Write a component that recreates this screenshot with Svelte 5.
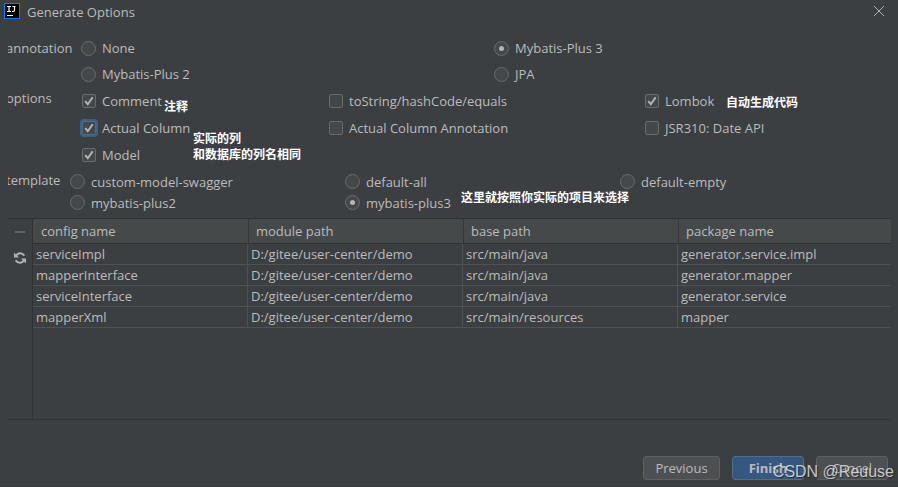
<script>
  const annotations = ['None', 'Mybatis-Plus 3', 'Mybatis-Plus 2', 'JPA'];
  const options = [
    { label: 'Comment', checked: true },
    { label: 'toString/hashCode/equals', checked: false },
    { label: 'Lombok', checked: true },
    { label: 'Actual Column', checked: true, active: true },
    { label: 'Actual Column Annotation', checked: false },
    { label: 'JSR310: Date API', checked: false },
    { label: 'Model', checked: true }
  ];
  const templates = ['custom-model-swagger', 'default-all', 'default-empty', 'mybatis-plus2', 'mybatis-plus3'];
  const columns = ['config name', 'module path', 'base path', 'package name'];
  const rows = [
    ['serviceImpl', 'D:/gitee/user-center/demo', 'src/main/java', 'generator.service.impl'],
    ['mapperInterface', 'D:/gitee/user-center/demo', 'src/main/java', 'generator.mapper'],
    ['serviceInterface', 'D:/gitee/user-center/demo', 'src/main/java', 'generator.service'],
    ['mapperXml', 'D:/gitee/user-center/demo', 'src/main/resources', 'mapper']
  ];
  let annotation = $state('Mybatis-Plus 3');
  let template = $state('mybatis-plus3');
</script>

<div class="dialog">
  <header>
    <svg class="logo" width="16" height="16" viewBox="0 0 16 16" aria-hidden="true">
      <rect width="16" height="16" fill="#087cfa" />
      <rect x="1" y="1" width="14" height="14" fill="#000" />
      <path d="M3 3.500h4M5 3.500v5M3 8.500h4M8.500 3.500h3M10.500 3.500v3.800q0 1.200-1.200 1.200H8" fill="none" stroke="#fff" stroke-width="1.200" />
      <path d="M3 12.500h6" stroke="#fff" stroke-width="1" />
    </svg>
    <h1>Generate Options</h1>
    <button class="close" aria-label="Close">
      <svg width="12" height="12" viewBox="0 0 12 12"><path d="M1 1l10 10M11 1L1 11" stroke="#afb1b3" stroke-width="1" /></svg>
    </button>
  </header>

  <main>
    <fieldset class="annotation" aria-labelledby="l-annotation">
      <span class="name" id="l-annotation">annotation</span>
      <div class="choices">
        {#each annotations as item}
          <label><input type="radio" name="annotation" value={item} bind:group={annotation} />{item}</label>
        {/each}
      </div>
    </fieldset>

    <fieldset class="options" aria-labelledby="l-options">
      <span class="name" id="l-options">options</span>
      <div class="choices">
        {#each options as item}
          <label>
            <span class="box" class:active={item.active}>
              <input type="checkbox" bind:checked={item.checked} />
              <svg width="14" height="14" viewBox="0 0 14 14" aria-hidden="true"><path d="M3.200 7.200l2.600 3L10.700 3.200" fill="none" stroke="#b4b4b4" stroke-width="2" /></svg>
            </span>{item.label}
          </label>
        {/each}
      </div>
      <p class="note comment">注释</p>
      <p class="note column">实际的列<br />和数据库的列名相同</p>
      <p class="note lombok">自动生成代码</p>
    </fieldset>

    <fieldset class="template" aria-labelledby="l-template">
      <span class="name" id="l-template">template</span>
      <div class="choices">
        {#each templates as item}
          <label><input type="radio" name="template" value={item} bind:group={template} />{item}</label>
        {/each}
      </div>
      <p class="note project">这里就按照你实际的项目来选择</p>
    </fieldset>

    <section>
      <div class="tools">
        <button aria-label="Remove" disabled>
          <svg width="12" height="12" viewBox="0 0 12 12"><path d="M1 6h10" stroke="#616364" stroke-width="2" /></svg>
        </button>
        <button aria-label="Refresh">
          <svg width="12" height="12" viewBox="0 0 12 12" fill="none" stroke="#afb1b3" stroke-width="2">
            <path d="M1.800 4.300Q3.200 1.200 6.200 1.200Q8.600 1.200 10.400 3.600M10.200 7.700Q8.800 10.800 5.800 10.800Q3.400 10.800 1.600 8.400" />
            <path d="M0 .6v5h5zM12 11.400v-5H7z" fill="#afb1b3" stroke="none" />
          </svg>
        </button>
      </div>
      <div class="grid">
        <table>
          <thead>
            <tr>{#each columns as column}<th scope="col">{column}</th>{/each}</tr>
          </thead>
          <tbody>
            {#each rows as row}
              <tr>{#each row as cell}<td>{cell}</td>{/each}</tr>
            {/each}
          </tbody>
        </table>
      </div>
    </section>
  </main>

  <footer>
    <button class="previous">Previous</button>
    <button class="primary">Finish</button>
    <button>Cancel</button>
    <span class="watermark">CSDN @Reuuse</span>
  </footer>
</div>

<style>
  :global(body) {
    margin: 0;
    background: #3c3f41;
  }
  .dialog,
  .dialog button {
    font: 13px/18px 'Open Sans', 'Noto Sans CJK SC', sans-serif;
    color: #bbb;
  }
  .dialog {
    box-sizing: border-box;
    min-height: 100vh;
    display: flex;
    flex-direction: column;
    background: #3c3f41;
    border-bottom: 1px solid #35383a;
  }
  header {
    display: flex;
    align-items: center;
    gap: 7px;
    height: 22px;
    padding: 0 13px 0 4px;
  }
  h1 {
    flex: 1;
    margin: 0;
    padding-top: 2px;
    font-size: 13px;
    font-weight: 400;
  }
  .close,
  .tools button {
    display: flex;
    padding: 0;
    border: 0;
    background: none;
  }
  main {
    flex: 1;
    display: flex;
    flex-direction: column;
    padding: 13px 7px 0 8px;
  }
  fieldset {
    position: relative;
    display: flex;
    min-width: 0;
    margin: 0;
    padding: 0;
    border: 0;
  }
  .name {
    flex: none;
    box-sizing: border-box;
    width: 73px;
    overflow: hidden;
    text-indent: -2px;
  }
  .template .name {
    width: 62px;
  }
  .annotation .name {
    padding-top: 4px;
  }
  .options .name {
    padding-top: 2px;
  }
  .choices {
    flex: 1;
    display: grid;
  }
  .annotation .choices {
    grid-template-columns: 413fr 397fr;
    grid-auto-rows: 26px;
  }
  .options .choices {
    grid-template-columns: 247fr 316fr 247fr;
    grid-auto-rows: 27px;
  }
  .template .choices {
    grid-template-columns: 275fr 275fr 271fr;
    grid-auto-rows: 21px;
  }
  label {
    display: flex;
    align-items: center;
    gap: 6px;
    white-space: nowrap;
  }
  input {
    appearance: none;
    box-sizing: border-box;
    flex: none;
    margin: 0;
    border: 1px solid #6b6b6b;
    background: #43494a;
  }
  input[type='radio'] {
    display: grid;
    place-items: center;
    width: 15px;
    height: 15px;
    border-radius: 50%;
  }
  input[type='radio']:checked::before {
    content: '';
    width: 5px;
    height: 5px;
    border-radius: 50%;
    background: #b4b4b4;
  }
  .box {
    display: grid;
    padding-left: 1px;
  }
  .box > * {
    grid-area: 1 / 1;
  }
  .box input {
    width: 14px;
    height: 14px;
    border-radius: 2px;
  }
  .box.active input {
    border-color: #466d94;
    box-shadow: 0 0 0 2px #3d6185;
  }
  .box svg {
    pointer-events: none;
    visibility: hidden;
  }
  .box input:checked + svg {
    visibility: visible;
  }
  .note {
    position: absolute;
    margin: 0;
    font: bold 12px/16px 'Noto Sans CJK SC', sans-serif;
    color: #fff;
    white-space: nowrap;
  }
  .comment {
    left: 156px;
    top: 11px;
  }
  .column {
    left: 185px;
    top: 43px;
  }
  .lombok {
    left: 718px;
    top: 7px;
  }
  .project {
    left: 453px;
    top: 18px;
  }
  .template {
    margin-top: 3px;
  }
  section {
    flex: 1;
    display: flex;
    margin-top: 5px;
    border: solid #323232;
    border-width: 1px 0;
  }
  .tools {
    display: flex;
    flex-direction: column;
    gap: 14px;
    padding: 7px 6px;
  }
  .grid {
    flex: 1;
    border-left: 1px solid #323232;
  }
  table {
    width: 100%;
    table-layout: fixed;
    border-collapse: separate;
    border-spacing: 0;
  }
  th,
  td {
    box-sizing: border-box;
    text-align: left;
    font-weight: 400;
    white-space: nowrap;
  }
  th {
    height: 25px;
    padding: 0 8px;
    background: #45494a;
    border-bottom: 1px solid #323232;
  }
  th + th {
    padding-left: 7px;
    border-left: 1px solid #35383a;
  }
  th:last-child {
    width: 213px;
  }
  td {
    height: 21px;
    padding: 0 3px;
    border: solid #4f5254;
    border-width: 0 1px 1px 0;
  }
  td:last-child {
    border-right: 0;
  }
  footer {
    position: relative;
    display: flex;
    justify-content: flex-end;
    gap: 12px;
    padding: 36px 10px 6px;
  }
  footer button {
    box-sizing: border-box;
    width: 72px;
    height: 24px;
    padding: 0;
    border: 1px solid #5e6060;
    border-radius: 3px;
    background: #4c5052;
  }
  footer .previous {
    width: 77px;
  }
  footer .primary {
    border-color: #4c708c;
    background: #365880;
    font-weight: 700;
  }
  .watermark {
    position: absolute;
    right: 4px;
    bottom: 3px;
    font: 16px/22px 'Liberation Sans', Arial, sans-serif;
    color: rgba(225, 225, 225, 0.85);
    text-shadow: 1px 1px 1px rgba(0, 0, 0, 0.5);
  }
</style>
